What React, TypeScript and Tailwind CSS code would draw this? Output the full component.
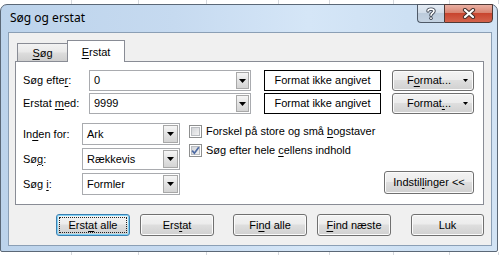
import React from "react";

function U({ children }: { children: React.ReactNode }) {
  return <span className="underline decoration-1 underline-offset-[2px]">{children}</span>;
}

function Tri() {
  return (
    <svg width="7" height="4" viewBox="0 0 7 4">
      <path d="M0 0H7L3.5 4Z" fill="#000" />
    </svg>
  );
}

function Combo({ className, value, arrow }: { className: string; value: string; arrow: string }) {
  return (
    <div className={`flex border border-[#a9abaf] bg-white p-px ${className}`}>
      <div className="flex-1 flex items-center pl-[3px]">{value}</div>
      <div
        className={`${arrow} flex items-center justify-center border border-[#a8a8a8] bg-[linear-gradient(#f6f6f6,#e3e3e3_50%,#d4d4d4)]`}
      >
        <Tri />
      </div>
    </div>
  );
}

const btn =
  "flex items-center justify-center rounded-[3px] border border-[#707070] bg-[linear-gradient(#f3f3f3_0%,#ececec_45%,#dedede_50%,#d0d0d0_100%)] shadow-[inset_0_0_0_1px_#fbfbfb]";

function Check({ checked }: { checked?: boolean }) {
  return (
    <div className="w-[13px] h-[13px] border border-[#8e8f8f] bg-white p-px shrink-0 relative">
      <div className="w-full h-full border border-[#b9bcc0] bg-[linear-gradient(135deg,#d2d4d8,#f2f2f2)]" />
      {checked && (
        <svg className="absolute left-0 top-0" width="11" height="11" viewBox="0 0 11 11">
          <path d="M2.2 5.6 L4.4 8.2 L8.8 2.2" fill="none" stroke="#4d6aa3" strokeWidth="1.7" />
        </svg>
      )}
    </div>
  );
}

function GridStrip({ h }: { h: string }) {
  const widths = ["w-[72px]", "w-[67px]", "w-[68px]", "w-[72px]", "w-[51px]", "w-[64px]", "w-[56px]", "w-[49px]"];
  return (
    <div className={`${h} flex shrink-0 bg-white`}>
      {widths.map((w, i) => (
        <div key={i} className={`${w} h-full border-r border-[#d5d8dd] shrink-0`} />
      ))}
    </div>
  );
}

export default function App() {
  return (
    <div className="w-[499px] h-[255px] bg-white overflow-hidden flex flex-col font-['Liberation_Sans',Arial,sans-serif] text-[11px] text-black leading-none">
      <GridStrip h="h-[4px]" />
      <div className="w-[498px] h-[248px] shrink-0 rounded-t-[7px] rounded-b-[2px] border border-[#5b6877] bg-[linear-gradient(90deg,#bcd3eb_0%,#c6daf0_35%,#d5e6f7_62%,#cde0f3_82%,#d2e3f4_100%)] flex flex-col">
        {/* title bar */}
        <div className="h-[27px] shrink-0 flex items-start justify-between pl-[9px] pr-[4px]">
          <div className="pt-[5px] font-['Noto_Sans',sans-serif] text-[12px] leading-[16px] text-black">
            Søg og erstat
          </div>
          <div className="flex -mt-px">
            <div className="w-[27px] h-[19px] flex items-center justify-center border border-[#4f5a68] border-r-0 rounded-bl-[4px] bg-[linear-gradient(#e4ebf3_0%,#d2dde9_45%,#bccbdb_50%,#c5d3e2_100%)]">
              <svg width="10" height="13" viewBox="0 0 10 13">
                <path
                  d="M2 4 C2 1.5 8 1.5 8 4 C8 6 5 6 5 8.2"
                  fill="none"
                  stroke="#3b4350"
                  strokeWidth="3.4"
                  strokeLinecap="round"
                />
                <circle cx="5" cy="11.2" r="1.7" fill="#3b4350" />
                <path
                  d="M2 4 C2 1.5 8 1.5 8 4 C8 6 5 6 5 8.2"
                  fill="none"
                  stroke="#ffffff"
                  strokeWidth="1.6"
                  strokeLinecap="round"
                />
                <circle cx="5" cy="11.2" r="0.9" fill="#ffffff" />
              </svg>
            </div>
            <div className="w-[49px] h-[19px] flex items-center justify-center border border-[#4f3a36] rounded-br-[4px] bg-[linear-gradient(#eab0a3_0%,#d98673_45%,#c8452f_50%,#d4634c_100%)]">
              <svg width="14" height="11" viewBox="0 0 14 11">
                <path d="M3 2 L11 9 M11 2 L3 9" stroke="#45302c" strokeWidth="4.2" strokeLinecap="round" />
                <path d="M3 2 L11 9 M11 2 L3 9" stroke="#ffffff" strokeWidth="2.2" strokeLinecap="round" />
              </svg>
            </div>
          </div>
        </div>

        {/* client area */}
        <div className="ml-[7px] mr-[5px] mb-[5px] h-[214px] shrink-0 border border-[#8b9fb5] bg-[#f0f0f0] flex flex-col">
          {/* tabs */}
          <div className="h-[21px] mt-[7px] ml-[8px] flex items-end shrink-0">
            <div className="w-[50px] h-[18px] flex items-center justify-center pt-[2px] border-l border-t border-[#898c95] bg-[linear-gradient(#f3f3f3,#e9e9e9_45%,#dcdcdc_55%,#cfcfcf)]">
              <span>
                <U>S</U>øg
              </span>
            </div>
            <div className="w-[58px] h-[22px] -mb-px relative z-10 flex items-center justify-center pt-[1px] border-l border-t border-r border-[#898c95] bg-white">
              <span>
                <U>E</U>rstat
              </span>
            </div>
          </div>

          {/* panel */}
          <div className="ml-[6px] w-[469px] h-[144px] shrink-0 border border-[#898c95] bg-white flex flex-col pl-[7px] pt-[8px]">
            {/* row 1 */}
            <div className="flex items-center h-[21px]">
              <div className="w-[66px]">
                Søg efte<U>r</U>:
              </div>
              <Combo className="w-[162px] h-[21px]" value="0" arrow="w-[13px]" />
              <div className="ml-[13px] w-[117px] h-[21px] border border-black flex items-center justify-center">
                Format ikke angivet
              </div>
              <div className={`${btn} ml-[11px] w-[82px] h-[21px] relative`}>
                <span className="pr-[8px]">
                  F<U>o</U>rmat...
                </span>
                <div className="absolute right-[5px] top-[8px] flex">
                  <svg width="5" height="3" viewBox="0 0 5 3">
                    <path d="M0 0H5L2.5 3Z" fill="#000" />
                  </svg>
                </div>
              </div>
            </div>
            {/* row 2 */}
            <div className="flex items-center h-[21px] mt-[2px]">
              <div className="w-[66px]">
                Erstat <U>m</U>ed:
              </div>
              <Combo className="w-[162px] h-[21px]" value="9999" arrow="w-[13px]" />
              <div className="ml-[13px] w-[117px] h-[21px] border border-black flex items-center justify-center">
                Format ikke angivet
              </div>
              <div className={`${btn} ml-[11px] w-[82px] h-[21px] relative`}>
                <span className="pr-[8px]">
                  Format<U>.</U>..
                </span>
                <div className="absolute right-[5px] top-[8px] flex">
                  <svg width="5" height="3" viewBox="0 0 5 3">
                    <path d="M0 0H5L2.5 3Z" fill="#000" />
                  </svg>
                </div>
              </div>
            </div>

            {/* section 2 */}
            <div className="flex mt-[9px] h-[72px]">
              <div className="flex flex-col gap-[3px]">
                <div className="flex items-center h-[22px]">
                  <div className="w-[59px]">
                    In<U>d</U>en for:
                  </div>
                  <Combo className="w-[98px] h-[22px]" value="Ark" arrow="w-[15px]" />
                </div>
                <div className="flex items-center h-[22px]">
                  <div className="w-[59px]">
                    Sø<U>g</U>:
                  </div>
                  <Combo className="w-[98px] h-[22px]" value="Rækkevis" arrow="w-[15px]" />
                </div>
                <div className="flex items-center h-[22px]">
                  <div className="w-[59px]">
                    Søg <U>i</U>:
                  </div>
                  <Combo className="w-[98px] h-[22px]" value="Formler" arrow="w-[15px]" />
                </div>
              </div>
              <div className="flex-1 flex flex-col ml-[9px] pr-[9px] pb-[1px]">
                <div className="flex flex-col gap-[6px] pt-[2px]">
                  <div className="flex items-center gap-[4px] h-[13px]">
                    <Check />
                    <span>
                      Forskel på store og små <U>b</U>ogstaver
                    </span>
                  </div>
                  <div className="flex items-center gap-[4px] h-[13px]">
                    <Check checked />
                    <span>
                      Søg efter hele <U>c</U>ellens indhold
                    </span>
                  </div>
                </div>
                <div className="flex-1" />
                <div className="flex justify-end">
                  <div className={`${btn} w-[90px] h-[23px]`}>
                    <span>
                      Indstil<U>l</U>inger &lt;&lt;
                    </span>
                  </div>
                </div>
              </div>
            </div>
          </div>

          {/* bottom buttons */}
          <div className="flex mt-[9px] ml-[47px] h-[22px] shrink-0">
            <div className="w-[74px] h-[22px] rounded-[3px] border border-[#3c7fb1] bg-[linear-gradient(#f3f3f3_0%,#ececec_45%,#dedede_50%,#d0d0d0_100%)] shadow-[inset_0_0_0_1px_#7fd3f7] p-[2px] flex">
              <div className="flex-1 border border-dotted border-[#222] flex items-center justify-center">
                <span>
                  Erst<U>a</U>t alle
                </span>
              </div>
            </div>
            <div className={`${btn} ml-[10px] w-[74px] h-[22px]`}>
              <span>
                Ers<U>t</U>at
              </span>
            </div>
            <div className={`${btn} ml-[19px] w-[74px] h-[22px]`}>
              <span>
                Fi<U>n</U>d alle
              </span>
            </div>
            <div className={`${btn} ml-[10px] w-[74px] h-[22px]`}>
              <span>
                <U>F</U>ind næste
              </span>
            </div>
            <div className={`${btn} ml-[20px] w-[73px] h-[22px]`}>
              <span>Luk</span>
            </div>
          </div>
        </div>
      </div>
      <GridStrip h="h-[3px]" />
    </div>
  );
}
